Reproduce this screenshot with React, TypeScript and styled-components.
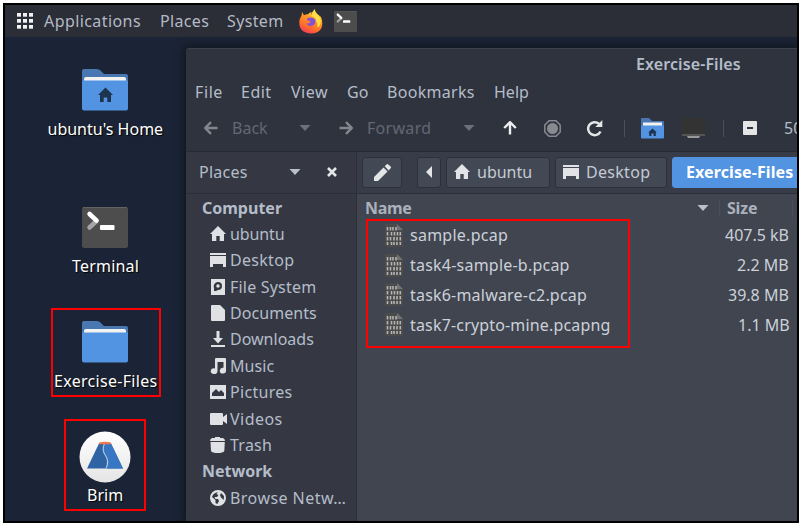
import React from "react";
import styled, { createGlobalStyle, css } from "styled-components";

const Global = createGlobalStyle`
  * { box-sizing: border-box; }
  html, body { margin: 0; background: #fff; overflow: hidden; }
  body { font-family: "Noto Sans", "Open Sans", sans-serif; font-size: 16px; line-height: 20px; }
  svg { display: block; flex: none; }
`;

const Frame = styled.div`
  width: 796px;
  height: 520px;
  margin: 3px 0 0 3px;
  border: 2px solid #000;
  background: #1b2436;
  overflow: hidden;
  display: flex;
  flex-direction: column;
`;

const Text = styled.span<{ $w: number; $ls?: number; $weight?: number }>`
  display: block;
  flex: none;
  width: ${(p) => p.$w}px;
  letter-spacing: ${(p) => p.$ls ?? 0}px;
  font-weight: ${(p) => p.$weight ?? 400};
  white-space: nowrap;
`;

const Panel = styled.header`
  height: 32px;
  flex: none;
  display: flex;
  align-items: center;
  background: #2b2d37;
  color: #b4bac4;
  padding-left: 12px;
`;
const PanelMenus = styled.nav`
  display: flex;
  gap: 19px;
  margin: 0 16px 0 11px;
`;
const Launchers = styled.div`
  display: flex;
  align-items: center;
  gap: 11px;
`;

const Desktop = styled.main`
  flex: 1;
  display: flex;
  min-height: 0;
`;
const Shortcuts = styled.section`
  width: 181px;
  flex: none;
  display: flex;
  flex-direction: column;
  align-items: center;
  padding-left: 19px;
`;
const Shortcut = styled.div<{ $w: number; $h: number; $gap: number; $pad: number; $shift?: number; $marked?: boolean }>`
  width: ${(p) => p.$w}px;
  height: ${(p) => p.$h}px;
  flex: none;
  margin-top: ${(p) => p.$gap}px;
  margin-right: ${(p) => -(p.$shift ?? 0)}px;
  padding-top: ${(p) => p.$pad}px;
  padding-right: ${(p) => p.$shift ?? 0}px;
  display: flex;
  flex-direction: column;
  align-items: center;
  color: #fff;
  text-shadow: 1px 1px 1px #000;
  ${(p) => p.$marked && css`border: 2px solid #fe0000;`}
`;
const Caption = styled.div<{ $top: number }>`
  margin-top: ${(p) => p.$top}px;
`;

const Window = styled.section`
  flex: 1;
  min-width: 0;
  margin-top: 11px;
  display: flex;
  flex-direction: column;
  background: #2f333e;
  color: #b4bdc9;
  border-top: 1px solid #3c404b;
  border-top-left-radius: 3px;
  box-shadow: 0 0 10px 2px rgba(0, 0, 0, 0.45);
  overflow: hidden;
`;
const TitleBar = styled.div`
  height: 31px;
  flex: none;
  padding: 5px 0 0 450px;
`;
const MenuBar = styled.nav`
  height: 25px;
  flex: none;
  display: flex;
  gap: 19px;
  padding: 2px 0 0 9px;
`;
const Toolbar = styled.div`
  height: 46px;
  flex: none;
  display: flex;
  align-items: center;
  padding-left: 18px;
`;
const Disabled = styled.div`
  color: #626874;
  display: flex;
  align-items: center;
`;
const Space = styled.span<{ $w: number }>`
  width: ${(p) => p.$w}px;
  flex: none;
`;
const Rule = styled.span`
  width: 1px;
  height: 17px;
  background: #4a4f5a;
  flex: none;
`;

const Body = styled.div`
  flex: 1;
  min-height: 0;
  display: flex;
  border-top: 1px solid #272a34;
`;
const Sidebar = styled.aside`
  width: 171px;
  flex: none;
  background: #353843;
  border-right: 1px solid #2d303b;
`;
const PlacesHeader = styled.div`
  height: 42px;
  display: flex;
  align-items: center;
  padding: 0 0 1px 13px;
  border-bottom: 1px solid #2b2e39;
`;
const PlaceList = styled.div`
  padding: 0.6px 0 0 16px;
`;
const PlaceRow = styled.div<{ $heading?: boolean }>`
  height: 26.35px;
  display: flex;
  align-items: center;
  gap: 3px;
  padding-left: ${(p) => (p.$heading ? 0 : 8)}px;
`;

const Content = styled.div`
  flex: 1;
  min-width: 0;
  display: flex;
  flex-direction: column;
  background: #404550;
`;
const PathBar = styled.div`
  height: 42px;
  flex: none;
  display: flex;
  align-items: center;
  padding: 0 0 1px 5px;
  background: #383b48;
  border-bottom: 1px solid #2b2e39;
`;
const PathButton = styled.div<{ $w: number; $after: number; $inset?: number; $active?: boolean }>`
  width: ${(p) => p.$w}px;
  height: 31px;
  margin-right: ${(p) => p.$after}px;
  flex: none;
  display: flex;
  align-items: center;
  justify-content: ${(p) => (p.$inset === undefined ? "center" : "flex-start")};
  padding-left: ${(p) => p.$inset ?? 0}px;
  gap: 7px;
  border: 1px solid ${(p) => (p.$active ? "#5294e2" : "#2d303b")};
  border-radius: 3px;
  background: ${(p) => (p.$active ? "#5294e2" : "#434855")};
  color: ${(p) => (p.$active ? "#fff" : "#c5cbd3")};
`;
const ColumnHeads = styled.div`
  height: 25px;
  flex: none;
  display: flex;
  align-items: center;
  padding: 3px 0 0 8px;
  color: #aab1bc;
`;
const Listing = styled.div`
  display: flex;
`;
const Files = styled.div`
  width: 264px;
  height: 129px;
  margin-left: 9px;
  border: 2px solid #fe0000;
`;
const Sizes = styled.div`
  flex: 1;
  padding: 2px 8px 0 0;
  display: flex;
  flex-direction: column;
  align-items: flex-end;
`;
const FileRow = styled.div`
  height: 29.8px;
  display: flex;
  align-items: center;
  gap: 7px;
  padding: 0 0 1px 17px;
  color: #ccd1d9;
`;

const HousePath = "M8 0L16 8H14V15H9.7V10H6.3V15H2V8H0Z";
const DeskPath = "M0 1H16V3H0ZM0 4H16V15H13V12H3V15H0Z";
const House = () => (
  <svg width="16" height="16" viewBox="0 0 16 16" fill="#e1e3e6"><path d={HousePath} /></svg>
);
const DeskIcon = () => (
  <svg width="16" height="16" viewBox="0 0 16 16" fill="#e1e3e6"><path d={DeskPath} /></svg>
);
const Folder = ({ home }: { home?: boolean }) => (
  <svg width="46" height="42" viewBox="0 0 46 42">
    <path d="M0 2Q0 0 2 0H15Q17 0 18.5 1.5L22 5H44Q46 5 46 7V20H0Z" fill="#4877b1" />
    <path d="M2 12V10Q2 8 4 8H42Q44 8 44 10V12Z" fill="#f2f2f0" />
    <path d="M0 11.5H46V39.5Q46 41.5 44 41.5H2Q0 41.5 0 39.5Z" fill="#5294e2" />
    {home && <path transform="translate(15.5 18.5)" d="M8 0L15.5 7.5H13.5V14.5H9.8V10H6.2V14.5H2.5V7.5H.5Z" fill="#1d344f" />}
  </svg>
);
const SmallFolder = () => (
  <svg width="23" height="21" viewBox="0 0 23 21">
    <path d="M0 1Q0 0 1 0H8L11 3H22Q23 3 23 4V12H0Z" fill="#4877b1" />
    <path d="M2 4.5H21V8H2Z" fill="#f2f2f0" />
    <path d="M0 7.5H23V19.5Q23 20.5 22 20.5H1Q0 20.5 0 19.5Z" fill="#5294e2" />
    <path d="M11.5 10.5L15.8 14.5H14.8V18H12.6V15.5H10.4V18H8.2V14.5H7.2Z" fill="#1d344f" />
  </svg>
);
const Terminal = ({ width, height }: { width: number; height: number }) => (
  <svg width={width} height={height} viewBox="0 0 46 41" preserveAspectRatio="none">
    <rect width="46" height="41" rx="2.5" fill="#4d4d4d" />
    <path d="M1 .5H45" stroke="#626262" />
    <path d="M7.5 20.5L14.5 14" stroke="#a5a5a5" strokeWidth="4.5" strokeLinecap="round" />
    <path d="M7.5 7L14.5 13.5" stroke="#fff" strokeWidth="4.5" strokeLinecap="round" />
    <rect x="18" y="18" width="14.5" height="5" rx="1" fill="#fff" />
  </svg>
);
const Firefox = () => (
  <svg width="24" height="25" viewBox="0 0 24 25">
    <defs>
      <linearGradient id="fox" x1=".75" y1="0" x2=".3" y2="1">
        <stop offset="0" stopColor="#fff14c" /><stop offset=".4" stopColor="#ff9a24" />
        <stop offset=".75" stopColor="#ff6a2c" /><stop offset="1" stopColor="#f2385f" />
      </linearGradient>
    </defs>
    <path d="M3.1 3L5 6.3Q7 5 9 5.3Q10.3 3.4 12.5 3L12.4 5.7Q13.6 3.3 15.5 0Q16 3 19 5.5Q22 7 23 11Q25 24 12 24.5Q0 24 .3 13Q.6 9 2.4 7Z" fill="url(#fox)" />
    <path d="M8 9.7Q12.5 7 16.2 10.6Q17.4 16.4 12 17Q8.4 17 7.6 14.2Q9.5 15 11.7 13.3Q10.3 11.4 8 11.2Z" fill="#8650d5" />
    <path d="M15.5 .8Q12 4 12.6 7.2Q17 8.2 17.2 12Q19.2 14.6 18.2 18.2Q22 17 21.8 11.4Q21 8 18.4 6Q15.8 4 15.5 .8Z" fill="#ffdf45" />
  </svg>
);
const Brim = () => (
  <svg width="52" height="52" viewBox="0 0 52 52">
    <defs><linearGradient id="disc" x1="0" y1="0" x2="0" y2="1"><stop stopColor="#fff" /><stop offset="1" stopColor="#e5e5e5" /></linearGradient></defs>
    <circle cx="26" cy="26" r="25.5" fill="url(#disc)" />
    <path d="M20 12.5H32L44 37.5H8Z" fill="#2e64a4" />
    <path d="M25 12.5H32L44 37.5H27Q30 31 26.5 26T25 12.5Z" fill="#3877c4" />
    <path d="M25.3 13Q22.5 19 26.5 24.5T27 37.5" fill="none" stroke="#b8cbe0" strokeWidth="1.1" />
    <path d="M20.5 11.3Q26 10.3 31.5 11.3L32.3 13.3H19.8Z" fill="#f27650" />
  </svg>
);
const Grid = () => (
  <svg width="16" height="16" viewBox="0 0 16 16" fill="#f2f2f2">
    {[0, 6, 12].map((y) => [0, 6, 12].map((x) => <rect key={`${x}-${y}`} x={x} y={y} width="4" height="3.7" />))}
  </svg>
);
const Down = ({ color = "#b8c0cb" }: { color?: string }) => (
  <svg width="12" height="6" viewBox="0 0 12 6"><path d="M.5 0H11.5L6 6Z" fill={color} /></svg>
);
const Arrow = ({ dir, color }: { dir: number; color: string }) => (
  <svg width="14" height="14" viewBox="0 0 14 14">
    <path transform={`rotate(${dir} 7 7)`} d="M13.5 7H1.8M7 1.2L1.2 7L7 12.8" fill="none" stroke={color} strokeWidth="2.4" />
  </svg>
);
const BinaryFile = () => (
  <svg width="18" height="23" viewBox="0 0 18 23">
    <path d="M1 0H12L18 6V22Q18 23 17 23H1Q0 23 0 22V1Q0 0 1 0Z" fill="#4b4b4b" />
    <path d="M12 0L18 6H12Z" fill="#737373" />
    <g stroke="#b4b4b4" strokeWidth="1.6" fill="none">
      <path d="M2.5 3V6.5M5.5 3V6.5M8 3V6.5M11 3V6.5M2.5 8V11.5M6.5 8V11.5M9.5 8V11.5M12.5 8V11.5M15.3 8V11.5M2.5 13V16.5M5.5 13V16.5M9 13V16.5M12 13V16.5M15.3 13V16.5M2.5 18V21M6.5 18V21M9 18V21M12 18V21M15.3 18V21" />
    </g>
  </svg>
);
const icons: Record<string, React.ReactNode> = {
  home: <path d={HousePath} />,
  desktop: <path d={DeskPath} />,
  disk: <path fillRule="evenodd" d="M1 0H15V16H1ZM8 3A4.3 4.3 0 0 0 4 9V12H6L8 11A4 4 0 0 0 8 3ZM8 5.2A1.8 1.8 0 1 1 8 8.8A1.8 1.8 0 0 1 8 5.2Z" />,
  document: <path d="M2 0H10L15 5V15Q15 16 14 16H2Q1 16 1 15V1Q1 0 2 0Z" />,
  download: <path d="M6.5 0H9.5V7H13L8 12.5L3 7H6.5ZM1 14H15V16H1Z" />,
  music: <path d="M5 1Q5 0 6 0H15Q16 0 16 1V12.5A3.1 2.9 0 1 1 13.5 9.8V4H7.5V13.3A3.4 2.9 0 1 1 5 10.4Z" />,
  picture: <path fillRule="evenodd" d="M0 1H16V15H0ZM2 12H14V9L11 6L9 8L6 5L2 9Z" />,
  video: <path d="M1 2H12Q13 2 13 3V6L17 3V13L13 10V13Q13 14 12 14H1Q0 14 0 13V3Q0 2 1 2Z" />,
  trash: <path d="M5 0H10V1H13Q15 2 15 4H0Q0 2 2 1H5ZM0.5 5H14.8L14.3 14Q13 16 7.7 16T1 14Z" />,
  globe: <path fillRule="evenodd" d="M8 0A8 8 0 1 0 8 16A8 8 0 1 0 8 0ZM8 2L6.5 4L8.5 5L7 7H4.5L5.5 9L8 9L9 11L7.3 14L5.5 13V10L2 7Q3 3 8 2ZM11 3L14 6L13.7 10L11 7.5L10 5Z" />,
};
const Glyph = ({ name }: { name: string }) => (
  <svg width="17" height="16" viewBox="0 0 17 16" fill="#dfe1e4">{icons[name]}</svg>
);

const places: [string, string, number, number][] = [
  ["home", "ubuntu", 54, -0.1],
  ["desktop", "Desktop", 65, 0.3],
  ["disk", "File System", 86, 0.2],
  ["document", "Documents", 86, 0.05],
  ["download", "Downloads", 84, 0],
  ["music", "Music", 45, 0.1],
  ["picture", "Pictures", 62, 0.3],
  ["video", "Videos", 53, 0.45],
  ["trash", "Trash", 43, 0.25],
];
const files: [string, number, number][] = [
  ["sample.pcap", 98, 0.25],
  ["task4-sample-b.pcap", 160, 0.22],
  ["task6-malware-c2.pcap", 177, 0.2],
  ["task7-crypto-mine.pcapng", 201, 0.17],
];
const sizes: [string, number][] = [
  ["407.5 kB", 64],
  ["2.2 MB", 52],
  ["39.8 MB", 61],
  ["1.1 MB", 51],
];

export default function App() {
  return (
    <>
      <Global />
      <Frame>
        <Panel>
          <Grid />
          <PanelMenus>
            <Text $w={97} $ls={0.42}>Applications</Text>
            <Text $w={48} $ls={0.35}>Places</Text>
            <Text $w={56} $ls={0.35}>System</Text>
          </PanelMenus>
          <Launchers><Firefox /><Terminal width={23} height={21} /></Launchers>
        </Panel>
        <Desktop>
          <Shortcuts>
            <Shortcut $w={120} $h={90} $gap={32} $pad={0}>
              <Folder home /><Caption $top={8}><Text $w={115}>ubuntu's Home</Text></Caption>
            </Shortcut>
            <Shortcut $w={110} $h={90} $gap={48} $pad={0}>
              <Terminal width={46} height={41} /><Caption $top={8}><Text $w={66} $ls={0.2}>Terminal</Text></Caption>
            </Shortcut>
            <Shortcut $w={110} $h={89} $gap={11} $pad={11} $shift={2} $marked>
              <Folder /><Caption $top={8}><Text $w={102} $ls={0.3}>Exercise-Files</Text></Caption>
            </Shortcut>
            <Shortcut $w={82} $h={92} $gap={22} $pad={10} $marked>
              <Brim /><Caption $top={2}><Text $w={36}>Brim</Text></Caption>
            </Shortcut>
          </Shortcuts>
          <Window>
            <TitleBar><Text $w={105} $ls={0.1} $weight={600}>Exercise-Files</Text></TitleBar>
            <MenuBar>
              <Text $w={27} $ls={0.6}>File</Text><Text $w={31} $ls={0.5}>Edit</Text><Text $w={37} $ls={0.5}>View</Text>
              <Text $w={21}>Go</Text><Text $w={88} $ls={0.3}>Bookmarks</Text><Text $w={35}>Help</Text>
            </MenuBar>
            <Toolbar>
              <Disabled>
                <Arrow dir={0} color="#83868d" /><Space $w={14} /><Text $w={37}>Back</Text>
                <Space $w={30} /><Down color="#6a707c" /><Space $w={28} />
                <Arrow dir={180} color="#83868d" /><Space $w={14} /><Text $w={65} $ls={0.3}>Forward</Text>
                <Space $w={31} /><Down color="#6a707c" />
              </Disabled>
              <Space $w={28} /><Arrow dir={90} color="#eceeef" />
              <Space $w={27} />
              <svg width="17" height="17" viewBox="0 0 17 17"><path d="M5 .8H12L16.2 5V12L12 16.2H5L.8 12V5Z" fill="none" stroke="#888a8f" strokeWidth="1.5" /><circle cx="8.5" cy="8.5" r="5.5" fill="#888a8f" /></svg>
              <Space $w={25} />
              <svg width="17" height="17" viewBox="0 0 17 17"><path d="M14.5 11.5A6.5 6.5 0 1 1 13 3.8" fill="none" stroke="#e3e5e7" strokeWidth="2.5" /><path d="M16.3 0V7H9.3Z" fill="#e3e5e7" /></svg>
              <Space $w={21} /><Rule /><Space $w={16} /><SmallFolder /><Space $w={18} />
              <svg width="23" height="21" viewBox="0 0 23 21"><path d="M0 0H23V16H0Z" fill="#333" /><path d="M0 16H23V18H0Z" fill="#555" /><path d="M5 18H18L17 20H6Z" fill="#999" /></svg>
              <Space $w={18} /><Rule /><Space $w={19} />
              <svg width="14" height="14" viewBox="0 0 14 14"><rect width="14" height="14" rx="1" fill="#e3e5e7" /><path d="M4 7H10" stroke="#2f333e" strokeWidth="2" /></svg>
              <Space $w={27} /><Text $w={30}>50%</Text>
            </Toolbar>
            <Body>
              <Sidebar>
                <PlacesHeader>
                  <Text $w={49} $ls={0.25}>Places</Text><Space $w={41} /><Down /><Space $w={26} />
                  <svg width="10" height="10" viewBox="0 0 10 10"><path d="M1 1L9 9M9 1L1 9" stroke="#e3e5e7" strokeWidth="2.6" /></svg>
                </PlacesHeader>
                <PlaceList>
                  <PlaceRow $heading><Text $w={80} $weight={700}>Computer</Text></PlaceRow>
                  {places.map(([icon, label, w, ls]) => (
                    <PlaceRow key={label}><Glyph name={icon} /><Text $w={w} $ls={ls}>{label}</Text></PlaceRow>
                  ))}
                  <PlaceRow $heading><Text $w={70} $weight={700}>Network</Text></PlaceRow>
                  <PlaceRow><Glyph name="globe" /><Text $w={117} $ls={0.45}>Browse Netw…</Text></PlaceRow>
                </PlaceList>
              </Sidebar>
              <Content>
                <PathBar>
                  <PathButton $w={40} $after={15}>
                    <svg width="17" height="17" viewBox="0 0 17 17" fill="#e3e5e7"><path d="M0 17V13L9.5 3.5L13.5 7.5L4 17ZM10.7 2.3L13 0Q14 -.2 16.6 2.5Q17.5 3.5 16.7 4.3L14.6 6.4Z" /></svg>
                  </PathButton>
                  <PathButton $w={24} $after={5}><svg width="6" height="12"><path d="M6 0V12L0 6Z" fill="#e3e5e7" /></svg></PathButton>
                  <PathButton $w={104} $after={5} $inset={7}><House /><Text $w={55}>ubuntu</Text></PathButton>
                  <PathButton $w={112} $after={5} $inset={7}><DeskIcon /><Text $w={65} $ls={0.3}>Desktop</Text></PathButton>
                  <PathButton $w={140} $after={0} $inset={13} $active><Text $w={112} $ls={0.1} $weight={700}>Exercise-Files</Text></PathButton>
                </PathBar>
                <ColumnHeads>
                  <Text $w={46} $ls={-0.3} $weight={700}>Name</Text><Space $w={286} /><Down /><Space $w={10} /><Rule />
                  <Space $w={7} /><Text $w={33} $ls={-0.2} $weight={700}>Size</Text><Space $w={32} /><Rule />
                </ColumnHeads>
                <Listing>
                  <Files>
                    {files.map(([name, w, ls]) => (
                      <FileRow key={name}><BinaryFile /><Text $w={w} $ls={ls}>{name}</Text></FileRow>
                    ))}
                  </Files>
                  <Sizes>
                    {sizes.map(([size, w]) => (
                      <FileRow key={size}><Text $w={w}>{size}</Text></FileRow>
                    ))}
                  </Sizes>
                </Listing>
              </Content>
            </Body>
          </Window>
        </Desktop>
      </Frame>
    </>
  );
}
